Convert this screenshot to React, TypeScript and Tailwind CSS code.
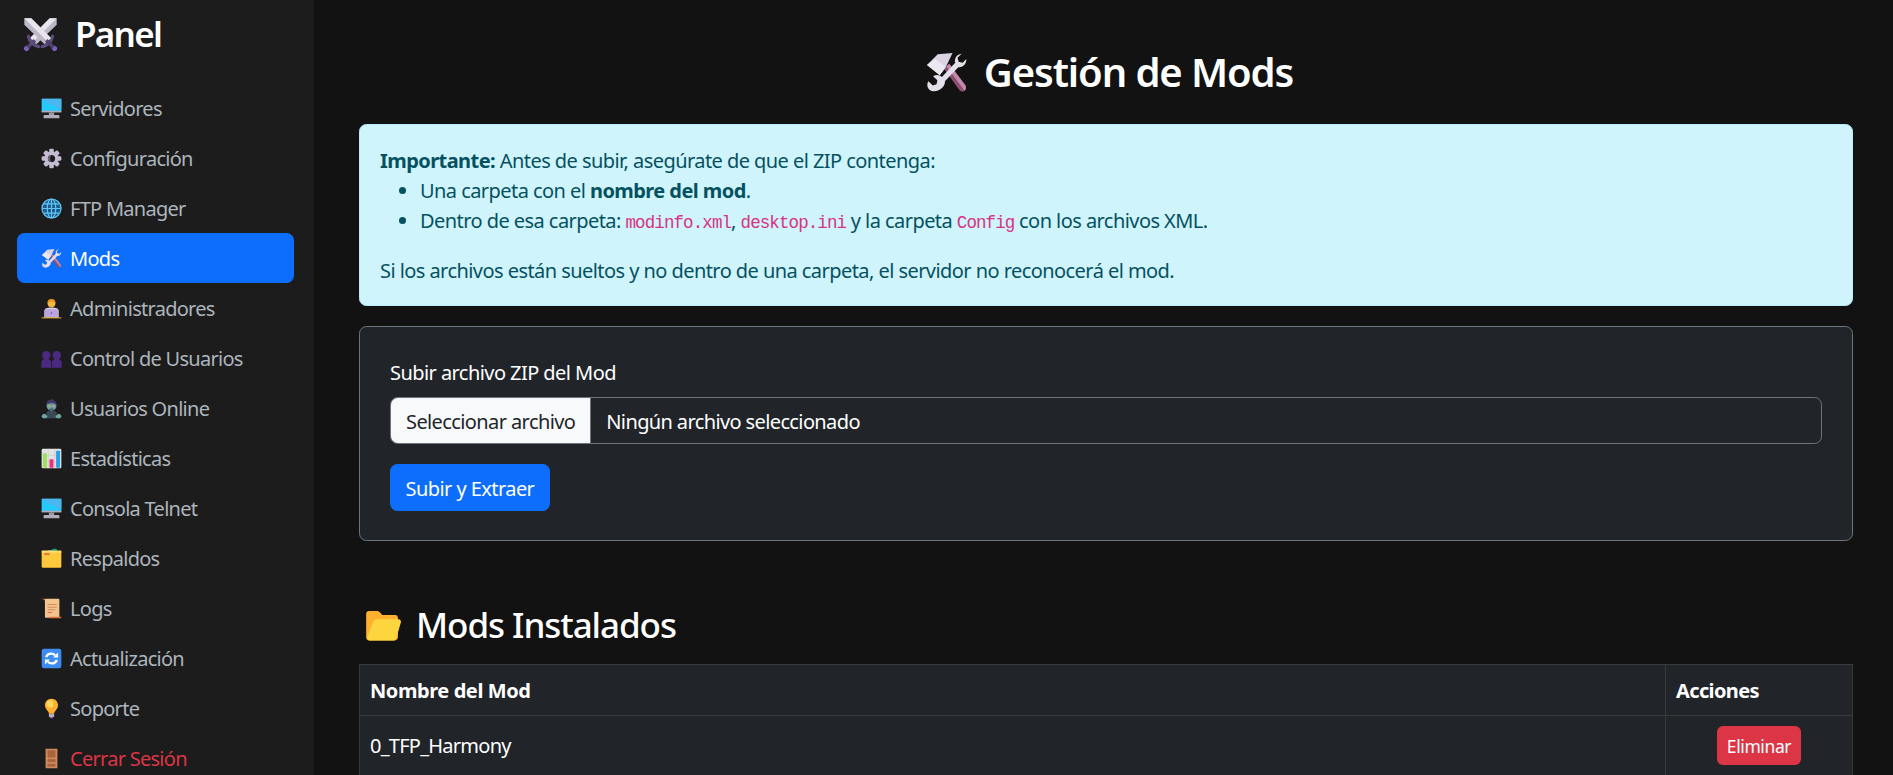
import React from "react";

type IconProps = { className?: string };

const Swords = ({ className }: IconProps) => {
  const half = (
    <>
      <path d="M2 2L8 2L25 19L19.5 24.5L2 7.5Z" fill="#bdb8c7" />
      <path d="M2 2L8 2L25 19L22 22Z" fill="#e8e5ec" />
      <path d="M5.5 17.5C6.5 22 10 25.5 14.5 26.5" fill="none" stroke="#5c4d7d" strokeWidth="2.8" strokeLinecap="round" />
      <path d="M21 21L27 27" stroke="#53426f" strokeWidth="3" />
      <path d="M25.5 28.5L28.5 25.5L30.5 27.5C30.5 29.5 29.5 30.5 27.5 30.5Z" fill="#7a5fb8" />
    </>
  );
  return (
    <svg viewBox="0 0 32 32" className={className}>
      <g transform="translate(32 0) scale(-1 1)">{half}</g>
      <g>{half}</g>
    </svg>
  );
};

const HammerWrench = ({ className }: IconProps) => (
  <svg viewBox="0 0 32 32" className={className}>
    <path d="M14 13L18 9.5L30 25.5C31 27 30.5 28.5 29.5 29.5C28.5 30.5 26.8 30.5 25.7 29.3Z" fill="#8c4f72" />
    <path d="M18 9.5L30 25.5C31 27 30.5 28.5 29.5 29.5L16 11.5Z" fill="#c08aa8" />
    <path d="M9.5 2.5L20.5 1.5L15 13L11 18L1.5 10.5Z" fill="#d9d3e2" />
    <path d="M1.5 10.5L7.5 6L15 11.5L11 18Z" fill="#ece8f1" />
    <path d="M4.5 29.5C1.8 28.5 1 25 2.5 22.5L5.8 25.6L8.6 24.8L9.2 21.8L6 18.8C8.2 17.4 11 17.6 12.6 19.4L22.5 8.8C21.6 5.8 23.5 2.5 27 2L27.2 2L24.2 5L25 8L28 8.8L30.8 6C31 9.5 28.2 12.5 24.8 12L14.8 22.6C15.4 26.8 9.5 31.4 4.5 29.5Z" fill="#e4deea" />
  </svg>
);

const Desktop = ({ className }: IconProps) => (
  <svg viewBox="0 0 32 32" className={className}>
    <rect x="1" y="1" width="30" height="20.5" rx="1.5" fill="#26c9fc" />
    <path d="M1 2.5C1 1.7 1.7 1 2.5 1H31L31 17Z" fill="#4db5ef" />
    <rect x="1" y="19.5" width="30" height="2.5" fill="#b4acbc" />
    <rect x="12" y="22" width="8" height="4" fill="#9b9b9b" />
    <rect x="4" y="26" width="24" height="5" rx="1" fill="#b4acbc" />
  </svg>
);

const Gear = ({ className }: IconProps) => (
  <svg viewBox="0 0 32 32" className={className}>
    <g fill="#c3bbd0">
      {[0, 45, 90, 135, 180, 225, 270, 315].map((a) => (
        <rect key={a} x="12.5" y="1" width="7" height="8" rx="2" transform={`rotate(${a} 16 16)`} />
      ))}
      <circle cx="16" cy="16" r="11" />
    </g>
    <circle cx="16" cy="16" r="5.5" fill="#1c1c1c" />
    <path d="M16 10.5a5.5 5.5 0 0 0 0 11a8 8 0 0 1 0-11Z" fill="#6c6478" />
  </svg>
);

const Globe = ({ className }: IconProps) => (
  <svg viewBox="0 0 32 32" className={className}>
    <circle cx="16" cy="16" r="15" fill="#1e5a8a" />
    <g fill="none" stroke="#5fc6f5" strokeWidth="1.8">
      <circle cx="16" cy="16" r="14.5" />
      <ellipse cx="16" cy="16" rx="6.5" ry="14.5" />
      <path d="M16 2V30M2 16H30M4 9H28M4 23H28" />
    </g>
  </svg>
);

const Technologist = ({ className }: IconProps) => (
  <svg viewBox="0 0 32 32" className={className}>
    <path d="M5 30V20C5 16 9 14.5 16 14.5S27 16 27 20V30Z" fill="#d7cfe6" />
    <circle cx="16" cy="8" r="6" fill="#f5b73d" />
    <path d="M10 8C10 3.5 12.5 1.5 16 1.5S22 3.5 22 8C20.5 6.5 18 5.5 16 5.5S11.5 6.5 10 8Z" fill="#ea8f1e" />
    <rect x="6" y="17" width="20" height="12.5" rx="1.2" fill="#b9a4e0" />
    <circle cx="16" cy="23" r="1.3" fill="#6c5a96" />
    <rect x="1" y="29.5" width="30" height="1.5" fill="#f0b429" />
  </svg>
);

const Busts = ({ className }: IconProps) => {
  const bust = (x: number) => (
    <g fill="#4a2a80" transform={`translate(${x} 0)`}>
      <circle cx="8" cy="11" r="6.5" />
      <path d="M0.5 30V23C0.5 18.5 3.5 16.5 8 16.5S15.5 18.5 15.5 23V30Z" />
    </g>
  );
  return (
    <svg viewBox="0 0 32 32" className={className}>
      {bust(0)}
      {bust(16)}
    </svg>
  );
};

const Zombie = ({ className }: IconProps) => (
  <svg viewBox="0 0 32 32" className={className}>
    <path d="M8 31V24C8 20.5 11 19 16 19S24 20.5 24 24V31Z" fill="#3c4a58" />
    <path d="M1 29C1 25 3 24 6 24L10 28L8 31H3Z" fill="#6fa8a0" />
    <path d="M31 29C31 25 29 24 26 24L22 28L24 31H29Z" fill="#6fa8a0" />
    <circle cx="16" cy="12" r="7.5" fill="#6c9ba6" />
    <path d="M8 10C8 5 11 3 14 3L18 1L18.5 3.5C22 4 24 7 24 11C21 8.5 19 8 16 8C13 8 10 9 8 10Z" fill="#413868" />
    <circle cx="13" cy="12.5" r="1.4" fill="#e6b04a" />
    <circle cx="19" cy="12.5" r="1.4" fill="#e6b04a" />
    <path d="M13 17H19" stroke="#2d3a42" strokeWidth="1.4" />
  </svg>
);

const BarChart = ({ className }: IconProps) => (
  <svg viewBox="0 0 32 32" className={className}>
    <rect x="1" y="1" width="30" height="30" rx="2" fill="#e3e3e3" />
    <path d="M11 1V31M21 1V31M1 11H31M1 21H31" stroke="#c9c9c9" strokeWidth="1" />
    <rect x="3" y="8" width="6" height="22" rx="1" fill="#9ee05a" />
    <rect x="13" y="17" width="6" height="13" rx="1" fill="#f0307a" />
    <rect x="23" y="4" width="6" height="26" rx="1" fill="#2d9ee8" />
  </svg>
);

const Dividers = ({ className }: IconProps) => (
  <svg viewBox="0 0 32 32" className={className}>
    <rect x="17" y="1" width="7" height="6" rx="1" fill="#00a67a" />
    <rect x="11" y="3" width="7" height="5" rx="1" fill="#2a8fd8" />
    <rect x="1" y="4" width="30" height="26" rx="2" fill="#ffc83d" />
    <rect x="1" y="4" width="30" height="3" fill="#ffdf6b" />
    <rect x="5" y="8" width="8" height="2.5" fill="#e8604a" />
  </svg>
);

const Scroll = ({ className }: IconProps) => (
  <svg viewBox="0 0 32 32" className={className}>
    <path d="M1 1H7C9 1 10 2.5 10 4V7H6V4.5C6 3.5 5 3 4 3Z" fill="#b8623a" />
    <rect x="6" y="1" width="22" height="29" rx="1.5" fill="#f4c48f" />
    <path d="M10 10H24M10 14H24M10 18H22" stroke="#d48c55" strokeWidth="1.6" />
    <path d="M10 22H17" stroke="#e8703a" strokeWidth="1.6" />
    <path d="M12 31C11 29.5 12 28.5 13.5 28.5H31C31 30 30.5 31 29 31Z" fill="#d9763f" />
  </svg>
);

const Refresh = ({ className }: IconProps) => (
  <svg viewBox="0 0 32 32" className={className}>
    <rect x="1" y="1" width="30" height="30" rx="3.5" fill="#3f8cf0" />
    <g fill="none" stroke="#fff" strokeWidth="3.6">
      <path d="M8 14C9 10.5 12 8.5 15.5 8.5C18 8.5 20 9.5 21.5 11" />
      <path d="M24 18C23 21.5 20 23.5 16.5 23.5C14 23.5 12 22.5 10.5 21" />
    </g>
    <path d="M18.5 14.5H26V7Z" fill="#fff" />
    <path d="M13.5 17.5H6V25Z" fill="#fff" />
  </svg>
);

const Bulb = ({ className }: IconProps) => (
  <svg viewBox="0 0 32 32" className={className}>
    <path d="M16 1C10 1 6 5.5 6 11C6 15 8.5 17.5 10.5 20C11.5 21.5 12 22.5 12 24H20C20 22.5 20.5 21.5 21.5 20C23.5 17.5 26 15 26 11C26 5.5 22 1 16 1Z" fill="#ffb02e" />
    <ellipse cx="14" cy="9" rx="5" ry="5.5" fill="#ffd75e" />
    <rect x="12" y="24" width="8" height="5" rx="1" fill="#b4acbc" />
    <rect x="13.5" y="29" width="5" height="2" rx="1" fill="#8d65c5" />
  </svg>
);

const Door = ({ className }: IconProps) => (
  <svg viewBox="0 0 32 32" className={className}>
    <rect x="7" y="1" width="18" height="30" rx="1" fill="#d08a5e" />
    <rect x="10" y="3.5" width="12" height="11" fill="#a9633d" />
    <rect x="10" y="17" width="12" height="4.5" fill="#a9633d" />
    <rect x="10" y="24" width="12" height="4.5" fill="#a9633d" />
    <rect x="8" y="15.5" width="3" height="1.4" fill="#f5a23c" />
  </svg>
);

const OpenFolder = ({ className }: IconProps) => (
  <svg viewBox="0 0 32 32" className={className}>
    <path d="M1 6C1 4.5 2 3.5 3.5 3.5H10.5C11.5 3.5 12.2 4 13 4.8L15 7H26C27.5 7 28.5 8 28.5 9.5V26C28.5 28 27 29 25.5 29H4C2 29 1 28 1 26Z" fill="#ffb02e" />
    <path d="M7 13C7.5 11.5 8.5 10.5 10 10.5H29C30.5 10.5 31.5 12 31 13.5L27 27C26.5 28.3 25.5 29 24.5 29H4C2.5 29 1.5 27.5 2 26Z" fill="#fcd53f" />
  </svg>
);

const navItems = [
  { label: "Servidores", Icon: Desktop },
  { label: "Configuración", Icon: Gear },
  { label: "FTP Manager", Icon: Globe },
  { label: "Mods", Icon: HammerWrench, active: true },
  { label: "Administradores", Icon: Technologist },
  { label: "Control de Usuarios", Icon: Busts },
  { label: "Usuarios Online", Icon: Zombie },
  { label: "Estadísticas", Icon: BarChart },
  { label: "Consola Telnet", Icon: Desktop },
  { label: "Respaldos", Icon: Dividers },
  { label: "Logs", Icon: Scroll },
  { label: "Actualización", Icon: Refresh },
  { label: "Soporte", Icon: Bulb },
  { label: "Cerrar Sesión", Icon: Door, danger: true },
];

const Code = ({ children }: { children: React.ReactNode }) => (
  <code className="font-['Liberation_Mono',monospace] text-[17.5px] leading-none tracking-[-0.9px] text-[#d63384]">{children}</code>
);

export default function App() {
  return (
    <div className="flex h-screen overflow-hidden bg-[#121212] font-['Noto_Sans',sans-serif] text-[20px] leading-[30px] tracking-[-0.56px] text-white">
      <aside className="flex w-[314px] shrink-0 flex-col bg-[#1c1c1c] pl-[17px] pr-[20px]">
        <div className="mb-[15px] flex h-[68px] shrink-0 items-center gap-[16px] pl-[5px]">
          <Swords className="h-[37px] w-[37px]" />
          <span className="text-[35px] font-semibold leading-[42px] tracking-[-1.7px]">Panel</span>
        </div>
        <nav className="flex shrink-0 flex-col tracking-[-0.72px]">
          {navItems.map(({ label, Icon, active, danger }) => (
            <a
              key={label}
              className={
                active
                  ? "flex h-[50px] items-center gap-[8px] rounded-[7.5px] bg-[#0d6efd] px-[24px] pt-[1px] text-white"
                  : danger
                    ? "flex h-[50px] items-center gap-[8px] px-[24px] pt-[1px] text-[#dc3545]"
                    : "flex h-[50px] items-center gap-[8px] px-[24px] pt-[1px] text-[#adb5bd]"
              }
            >
              <Icon className="h-[21px] w-[21px] shrink-0" />
              {label}
            </a>
          ))}
        </nav>
      </aside>

      <main className="min-w-0 flex-1 pl-[45px] pr-[40px] pt-[48px]">
        <h2 className="mb-[28px] flex items-center justify-center gap-[16px] pl-[6px] text-[40px] font-semibold leading-[48px] tracking-[-1.1px]">
          <HammerWrench className="h-[43px] w-[43px]" />
          Gestión de Mods
        </h2>

        <div className="mb-[20px] rounded-[7.5px] border border-[#b6effb] bg-[#cff4fc] px-[20px] pb-[19px] pt-[21px] text-[#055160]">
          <div>
            <strong className="font-bold">Importante:</strong> Antes de subir, asegúrate de que el ZIP contenga:
          </div>
          <ul className="mb-[20px] list-disc pl-[40px]">
            <li>
              Una carpeta con el <strong className="font-bold">nombre del mod</strong>.
            </li>
            <li>
              Dentro de esa carpeta: <Code>modinfo.xml</Code>, <Code>desktop.ini</Code> y la carpeta <Code>Config</Code> con los archivos XML.
            </li>
          </ul>
          <p>Si los archivos están sueltos y no dentro de una carpeta, el servidor no reconocerá el mod.</p>
        </div>

        <div className="rounded-[7.5px] border border-[#6c757d] bg-[#212529] px-[30px] pb-[29px] pt-[31px]">
          <label className="mb-[9px] block">Subir archivo ZIP del Mod</label>
          <div className="mb-[20px] flex h-[47px] items-stretch overflow-hidden rounded-[7.5px] border border-[#6c757d]">
            <span className="flex items-center border-r border-[#6c757d] bg-[#f8f9fa] px-[15px] pt-[2px] tracking-[-0.6px] text-[#212529]">Seleccionar archivo</span>
            <span className="flex items-center px-[15px] pt-[2px] tracking-[-0.62px]">Ningún archivo seleccionado</span>
          </div>
          <button className="h-[47px] rounded-[7.5px] bg-[#0d6efd] px-[15.5px] pt-[2px] text-white">Subir y Extraer</button>
        </div>

        <h3 className="mb-[18px] mt-[63px] flex items-center gap-[14px] pl-[6px] text-[35px] font-medium leading-[42px] tracking-[-1.05px]">
          <OpenFolder className="h-[37px] w-[37px]" />
          Mods Instalados
        </h3>

        <table className="w-full table-fixed border-collapse bg-[#212529]">
          <thead>
            <tr>
              <th className="border border-[#373b3e] px-[10px] pb-[9px] pt-[11px] text-left font-bold tracking-[-0.42px]">Nombre del Mod</th>
              <th className="w-[187px] border border-[#373b3e] px-[10px] pb-[9px] pt-[11px] text-left font-bold tracking-[-0.62px]">Acciones</th>
            </tr>
          </thead>
          <tbody>
            <tr>
              <td className="border border-[#373b3e] p-[10px] tracking-[-0.75px]">0_TFP_Harmony</td>
              <td className="border border-[#373b3e] p-[10px] text-center">
                <button className="h-[39px] rounded-[6px] bg-[#dc3545] px-[10px] text-[17.5px] leading-[26px] tracking-[-0.4px] text-white">Eliminar</button>
              </td>
            </tr>
          </tbody>
        </table>
      </main>
    </div>
  );
}
